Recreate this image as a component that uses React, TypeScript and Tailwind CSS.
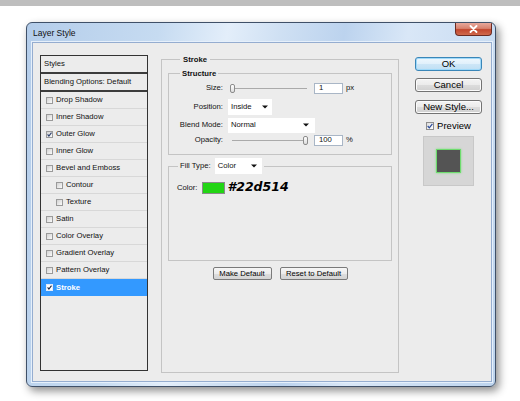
import React from "react";

function Check({ checked = false, selected = false }: { checked?: boolean; selected?: boolean }) {
  return (
    <span
      className={
        selected
          ? "flex h-[7px] w-[7px] shrink-0 items-center justify-center border border-[#e3ecf9] bg-white"
          : "flex h-[7px] w-[7px] shrink-0 items-center justify-center border border-[#9a9a9a] bg-gradient-to-br from-[#d2d2d2] to-[#fbfbfb]"
      }
    >
      {checked && (
        <svg width="5" height="5" viewBox="0 0 5 5" className="block">
          <path d="M0.6 2.4 L1.9 4 L4.5 0.6" fill="none" stroke={selected ? "#1b2742" : "#2c3f6c"} strokeWidth="1.1" />
        </svg>
      )}
    </span>
  );
}

function Arrow() {
  return (
    <svg width="6" height="4" viewBox="0 0 6 4" className="block">
      <path d="M0 0.5 H6 L3 3.5 Z" fill="#111" />
    </svg>
  );
}

function Slider() {
  return (
    <div className="relative h-[10px] w-[77px]">
      <div className="absolute left-[1px] right-0 top-[5px] h-px bg-[#aaaaaa]" />
      <div className="absolute left-[0px] top-[1px] h-[9px] w-[5px] rounded-[2px] border border-[#8c8c8c] bg-gradient-to-b from-white to-[#dcdcdc]" />
    </div>
  );
}

const items: [string, boolean, boolean][] = [
  ["Drop Shadow", false, false],
  ["Inner Shadow", false, false],
  ["Outer Glow", false, true],
  ["Inner Glow", false, false],
  ["Bevel and Emboss", false, false],
  ["Contour", true, false],
  ["Texture", true, false],
  ["Satin", false, false],
  ["Color Overlay", false, false],
  ["Gradient Overlay", false, false],
  ["Pattern Overlay", false, false],
];

function WinButton({ children, primary = false }: { children: React.ReactNode; primary?: boolean }) {
  return (
    <div
      className={
        primary
          ? "flex h-[14px] w-[67px] items-center justify-center rounded-[3px] border border-[#3a86b8] bg-[linear-gradient(#eef7fd_0%,#e0f0fb_50%,#cde6f7_51%,#bfdff4_100%)] shadow-[inset_0_0_0_1px_#9fd9f9] text-[9.5px] text-black"
          : "flex h-[14px] w-[67px] items-center justify-center rounded-[3px] border border-[#737373] bg-[linear-gradient(#f4f4f4_0%,#ebebeb_50%,#dcdcdc_51%,#d0d0d0_100%)] shadow-[inset_0_0_0_1px_#fbfbfb] text-[9.5px] text-black"
      }
    >
      {children}
    </div>
  );
}

function SmallButton({ children, w }: { children: React.ReactNode; w: string }) {
  return (
    <div
      className={`flex h-[13px] items-center justify-center rounded-[2px] border border-[#7a7a7a] bg-[linear-gradient(#f6f6f6_0%,#ececec_50%,#dedede_51%,#d3d3d3_100%)] text-[7.7px] text-black ${w}`}
    >
      {children}
    </div>
  );
}

export default function App() {
  return (
    <div
      className="h-[401px] w-[520px] overflow-hidden bg-white"
      style={{ fontFamily: '"Liberation Sans", Arial, sans-serif' }}
    >
      <div className="h-[6px] bg-[#bebebe]" />
      <div className="ml-[26px] mt-[16px] flex h-[365px] w-[470px] flex-col overflow-hidden rounded-[6px] border border-[#3f5068] bg-[linear-gradient(100deg,#b4cdea_0%,#c6dbf1_25%,#e3eefa_38%,#cfe0f3_48%,#bcd3ee_60%,#d9e7f7_72%,#bdd4ee_100%)] shadow-[3px_4px_9px_rgba(0,0,0,0.45)]">
        {/* title bar */}
        <div className="flex h-[19px] shrink-0 justify-between pl-[6px] pr-[3px]">
          <div className="flex items-center pt-[1px] text-[8.5px] text-[#111]">Layer Style</div>
          <div className="flex h-[13px] w-[37px] items-center justify-center rounded-b-[4px] border border-t-0 border-[#6b2b22] bg-[linear-gradient(#e7a89b_0%,#d7826f_45%,#c2472e_55%,#d06a4d_100%)]">
            <svg width="9" height="8" viewBox="0 0 9 8" className="block">
              <path d="M1.5 1 L7.5 7 M7.5 1 L1.5 7" stroke="#ffffff" strokeWidth="1.8" strokeLinecap="round" />
            </svg>
          </div>
        </div>
        {/* client */}
        <div className="mb-[4px] ml-[5px] mr-[3px] flex flex-1 border border-[#95add0] bg-[#ececec] pl-[7px] pt-[12px] shadow-[0_0_0_1px_#e6f0fb]">
          {/* styles list */}
          <div className="flex h-[316px] w-[108px] shrink-0 flex-col border border-[#333333] bg-[#ececec] text-[7.7px] text-[#111]">
            <div className="flex h-[18px] items-center border-b-2 border-[#3c3c3c] pl-[3px]">Styles</div>
            <div className="flex h-[18px] items-center border-b-2 border-[#3c3c3c] pl-[3px]">Blending Options: Default</div>
            {items.map(([name, indent, checked]) => (
              <div
                key={name}
                className={
                  indent
                    ? "flex h-[17px] items-center gap-[3px] border-b border-[#d8d8d8] pl-[15px]"
                    : "flex h-[17px] items-center gap-[3px] border-b border-[#d8d8d8] pl-[5px]"
                }
              >
                <Check checked={checked} />
                <span>{name}</span>
              </div>
            ))}
            <div className="flex h-[17px] items-center gap-[3px] bg-[#3399ff] pl-[5px] font-bold text-white">
              <Check checked selected />
              <span>Stroke</span>
            </div>
          </div>

          {/* middle panel */}
          <fieldset className="ml-[13px] h-[318px] w-[238px] shrink-0 border border-[#c4c4c4] px-[6px] text-[7.7px] text-[#111]">
            <legend className="ml-[12px] px-[3px] text-[7.7px] font-bold leading-[9px]">Stroke</legend>
            <fieldset className="mt-[5px] h-[86px] border border-[#c4c4c4] pb-[8px]">
              <legend className="ml-[11px] px-[2px] text-[7.7px] font-bold leading-[9px]">Structure</legend>
              <div className="mt-[4px] flex h-[12px] items-center">
                <div className="w-[54px] text-right">Size:</div>
                <div className="ml-[7px]">
                  <Slider />
                </div>
                <div className="ml-[7px] flex h-[11px] w-[29px] items-center border border-[#a9b6c6] bg-white pl-[4px]">1</div>
                <div className="ml-[3px]">px</div>
              </div>
              <div className="mt-[4px] flex h-[17px] items-center">
                <div className="w-[54px] text-right">Position:</div>
                <div className="ml-[5px] flex h-[16px] w-[44px] items-center justify-between bg-white pl-[3px] pr-[4px]">
                  <span>Inside</span>
                  <Arrow />
                </div>
              </div>
              <div className="mt-[2px] flex h-[16px] items-center">
                <div className="w-[54px] text-right">Blend Mode:</div>
                <div className="ml-[5px] flex h-[15px] w-[87px] items-center justify-between bg-white pl-[3px] pr-[6px]">
                  <span>Normal</span>
                  <Arrow />
                </div>
              </div>
              <div className="mt-[1px] flex h-[12px] items-center">
                <div className="w-[54px] text-right">Opacity:</div>
                <div className="ml-[9px] w-[75px]">
                  <div className="relative h-[10px] w-[75px]">
                    <div className="absolute left-0 right-0 top-[5px] h-px bg-[#aaaaaa]" />
                    <div className="absolute right-[-1px] top-[1px] h-[9px] w-[5px] rounded-[2px] border border-[#8c8c8c] bg-gradient-to-b from-white to-[#dcdcdc]" />
                  </div>
                </div>
                <div className="ml-[7px] flex h-[11px] w-[29px] items-center border border-[#a9b6c6] bg-white pl-[4px]">100</div>
                <div className="ml-[3px]">%</div>
              </div>
            </fieldset>
            <fieldset className="mt-[3px] h-[103px] border border-[#c4c4c4]">
              <legend className="ml-[9px] flex items-center px-[2px]">
                <span>Fill Type:</span>
                <div className="ml-[4px] flex h-[16px] w-[47px] items-center justify-between bg-white pl-[3px] pr-[5px]">
                  <span>Color</span>
                  <Arrow />
                </div>
              </legend>
              <div className="mt-[7px] flex h-[13px] items-center pl-[8px]">
                <span>Color:</span>
                <div className="ml-[4px] h-[12px] w-[23px] border border-[#8a8a8a] bg-[#22d514]" />
                <span
                  className="ml-[3px] text-[12.5px] font-bold italic text-black"
                  style={{ fontFamily: '"DejaVu Sans", Verdana, sans-serif' }}
                >
                  #22d514
                </span>
              </div>
            </fieldset>
            <div className="mt-[6px] flex justify-center gap-[8px]">
              <SmallButton w="w-[59px]">Make Default</SmallButton>
              <SmallButton w="w-[68px]">Reset to Default</SmallButton>
            </div>
          </fieldset>

          {/* right column */}
          <div className="ml-[16px] flex w-[67px] shrink-0 flex-col items-center">
            <div className="mt-[2px]">
              <WinButton primary>OK</WinButton>
            </div>
            <div className="mt-[7px]">
              <WinButton>Cancel</WinButton>
            </div>
            <div className="mt-[8px]">
              <WinButton>New Style...</WinButton>
            </div>
            <div className="mt-[7px] flex h-[10px] items-center gap-[3px] text-[9.5px]">
              <span className="flex h-[8px] w-[8px] items-center justify-center border border-[#8d8d8d] bg-gradient-to-br from-[#dcdcdc] to-white">
                <svg width="6" height="6" viewBox="0 0 6 6" className="block">
                  <path d="M0.7 3 L2.3 4.8 L5.4 0.8" fill="none" stroke="#2a4a9a" strokeWidth="1.2" />
                </svg>
              </span>
              <span>Preview</span>
            </div>
            <div className="mt-[5px] flex h-[50px] w-[51px] items-center justify-center border border-[#c8c8c8] bg-[#d6d6d6]">
              <div className="h-[24px] w-[25px] border border-[#6edc6e] bg-[#545454] shadow-[0_0_2px_#7de07d]" />
            </div>
          </div>
        </div>
      </div>
    </div>
  );
}
